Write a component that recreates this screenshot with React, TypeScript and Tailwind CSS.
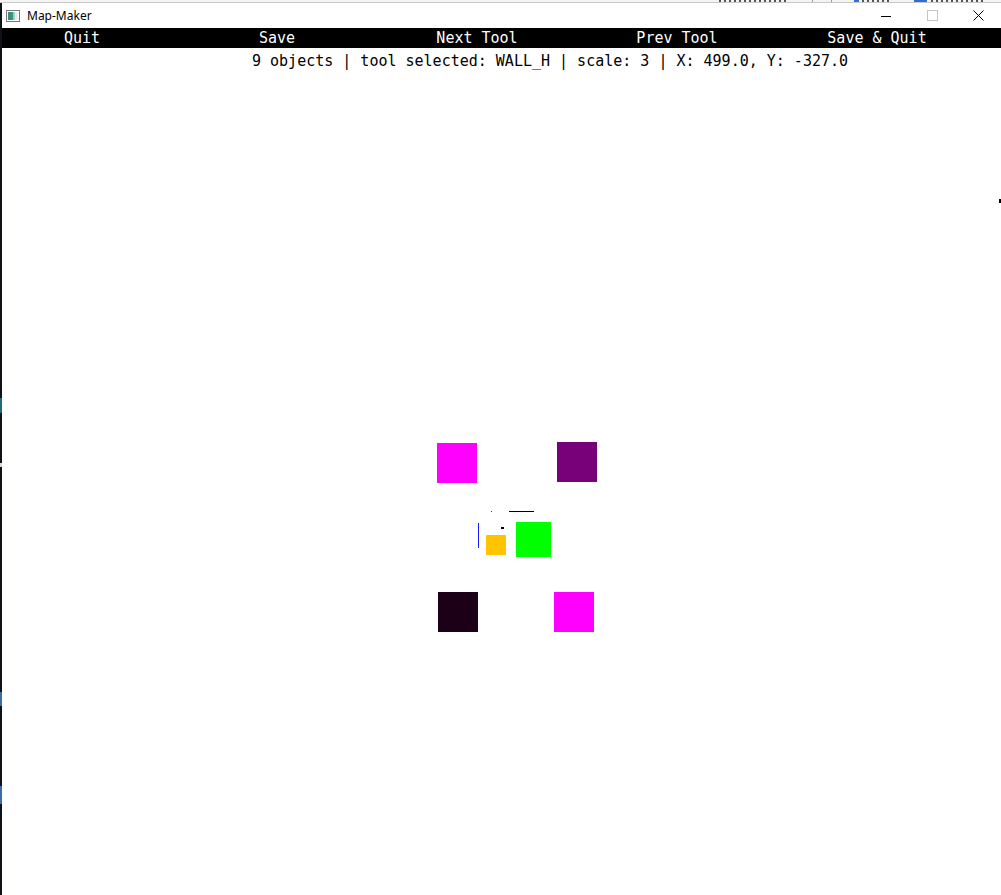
const mono = { fontFamily: '"DejaVu Sans Mono", "Liberation Mono", monospace' };

const menu = ["Save", "Next Tool", "Prev Tool", "Save & Quit"];

function AppIcon() {
  return (
    <svg width="14" height="12" viewBox="0 0 14 12">
      <rect x="0.5" y="0.5" width="13" height="11" fill="#ffffff" stroke="#7a7a7a" />
      <rect x="2" y="2" width="5" height="8" fill="#3f8f7e" />
      <rect x="7" y="2" width="2" height="8" fill="#9ccfc4" />
      <rect x="9" y="2" width="3" height="8" fill="#e6eef0" />
    </svg>
  );
}

function WindowButtons() {
  return (
    <div className="flex h-full">
      <div className="flex w-[46px] items-center justify-center">
        <svg width="10" height="10" viewBox="0 0 10 10">
          <line x1="0" y1="5.5" x2="10" y2="5.5" stroke="#000" strokeWidth="1" />
        </svg>
      </div>
      <div className="flex w-[46px] items-center justify-center">
        <svg width="11" height="11" viewBox="0 0 11 11">
          <rect x="0.5" y="0.5" width="10" height="10" fill="none" stroke="#c4c4c4" />
        </svg>
      </div>
      <div className="flex w-[46px] items-center justify-center">
        <svg width="11" height="11" viewBox="0 0 11 11">
          <path d="M0.5 0.5 L10.5 10.5 M10.5 0.5 L0.5 10.5" stroke="#000" strokeWidth="1" />
        </svg>
      </div>
    </div>
  );
}

// the bottoms of letters from the window behind, drawn as specks
function Specks({ w }: { w: number }) {
  return (
    <svg width={w} height="3" viewBox={`0 0 ${w} 3`}>
      {Array.from({ length: Math.floor(w / 5) }).map((_, i) => (
        <rect key={i} x={i * 5 + 1} y="0" width="2" height="2" fill="#555" />
      ))}
    </svg>
  );
}

// objects on the map, page coords minus canvas origin (2, 48)
const objects = [
  { x: 435, y: 395, w: 40, h: 40, c: "bg-[#ff00ff]" },
  { x: 555, y: 394, w: 40, h: 40, c: "bg-[#780078]" },
  { x: 489, y: 463, w: 1, h: 1, c: "bg-[#d00000]" },
  { x: 507, y: 463, w: 25, h: 1, c: "bg-black" },
  { x: 476, y: 475, w: 1, h: 25, c: "bg-[#1a1aff]" },
  { x: 499, y: 479, w: 3, h: 2, c: "bg-black" },
  { x: 484, y: 487, w: 20, h: 20, c: "bg-[#ffc300]" },
  { x: 514, y: 474, w: 35, h: 35, c: "bg-[#00ff00]" },
  { x: 436, y: 544, w: 40, h: 40, c: "bg-[#1c0018]" },
  { x: 552, y: 544, w: 40, h: 40, c: "bg-[#ff00ff]" },
  { x: 997, y: 151, w: 2, h: 4, c: "bg-black" },
];

export default function App() {
  return (
    <div className="flex h-[895px] w-[1001px] flex-col overflow-hidden bg-white">
      {/* sliver of the window behind */}
      <div className="flex h-[3px] overflow-hidden border-b border-[#c8c8c8] bg-[#f4f4f4]">
        <div className="w-[718px]" />
        <Specks w={72} />
        <div className="w-[22px]" />
        <div className="h-full w-px bg-[#9a9a9a]" />
        <div className="w-[18px]" />
        <div className="h-full w-px bg-[#9a9a9a]" />
        <div className="w-[22px]" />
        <div className="h-full w-[5px] bg-[#2f6fd0]" />
        <div className="w-[2px]" />
        <Specks w={30} />
        <div className="w-[23px]" />
        <div className="h-full w-[13px] bg-[#2f6fd0]" />
        <div className="w-[3px]" />
        <Specks w={55} />
      </div>

      <div className="flex flex-1">
        <div className="flex w-[2px] flex-col bg-[#0e1216]">
          <div className="h-[395px]" />
          <div className="h-[15px] bg-[#1f6a80]" />
          <div className="h-[50px]" />
          <div className="h-[4px] bg-[#d8d8d8]" />
          <div className="h-[225px]" />
          <div className="h-[14px] bg-[#3a6ea5]" />
          <div className="h-[80px]" />
          <div className="h-[18px] bg-[#3a6ea5]" />
        </div>

        <div className="flex flex-1 flex-col">
          {/* title bar */}
          <div className="flex h-[25px] items-center justify-between">
            <div className="flex items-center gap-[7px] pl-[4px]">
              <AppIcon />
              <span
                className="text-[12px] leading-none text-black"
                style={{ fontFamily: '"Noto Sans", "Open Sans", sans-serif' }}
              >
                Map-Maker
              </span>
            </div>
            <WindowButtons />
          </div>

          {/* menu bar */}
          <div className="flex h-[20px] bg-black text-[15px] leading-[20px] text-white" style={mono}>
            <div className="w-[175px] pr-[15px] text-center">Quit</div>
            {menu.map((m) => (
              <div key={m} className="w-[200px] whitespace-pre text-center">
                {m}
              </div>
            ))}
          </div>

          {/* map canvas */}
          <div className="relative flex-1">
            <div className="pl-[250px] pt-[4px] text-[15px] leading-[18px] whitespace-pre text-black" style={mono}>
              9 objects | tool selected: WALL_H | scale: 3 | X: 499.0, Y: -327.0
            </div>
            {objects.map((o, i) => (
              <div
                key={i}
                className={`absolute ${o.c}`}
                style={{ left: o.x, top: o.y, width: o.w, height: o.h }}
              />
            ))}
          </div>
        </div>
      </div>
    </div>
  );
}
